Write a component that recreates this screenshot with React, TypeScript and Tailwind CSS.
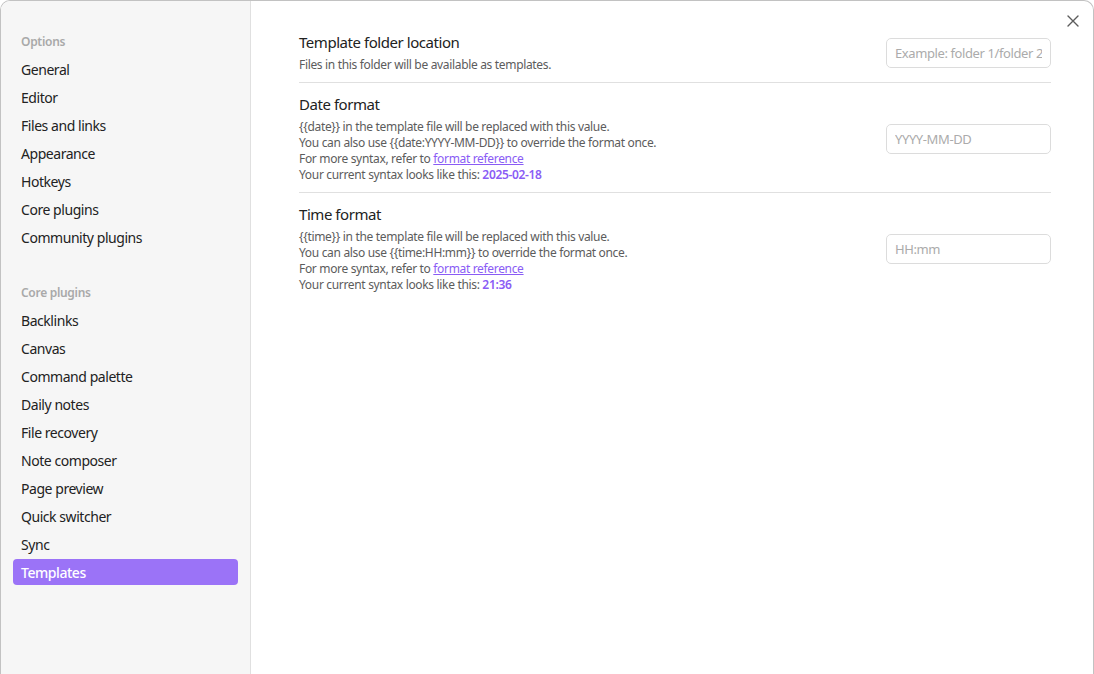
import React from 'react';

const OPTIONS = ['General', 'Editor', 'Files and links', 'Appearance', 'Hotkeys', 'Core plugins', 'Community plugins'];
const CORE = ['Backlinks', 'Canvas', 'Command palette', 'Daily notes', 'File recovery', 'Note composer', 'Page preview', 'Quick switcher', 'Sync', 'Templates'];

function NavItem({ label, active }: { label: string; active?: boolean }) {
  return (
    <div
      className={`h-[26px] mb-[2px] px-2 flex items-center rounded-[4px] text-[14px] tracking-[-0.45px] ${
        active ? 'bg-[#9b73f7] text-white font-medium' : 'text-[#222222]'
      }`}
    >
      {label}
    </div>
  );
}

function Setting({
  title,
  placeholder,
  children,
  last,
}: {
  title: string;
  placeholder: string;
  children: React.ReactNode;
  last?: boolean;
}) {
  return (
    <div className={`flex items-center pt-[11px] pb-[9px] ${last ? '' : 'border-b border-[#e0e0e0]'}`}>
      <div className="flex-1">
        <div className="text-[15px] leading-5 tracking-[-0.45px] text-[#222222]">{title}</div>
        <div className="mt-[5px] text-[12px] leading-4 tracking-[-0.33px] text-[#5c5c5c]">{children}</div>
      </div>
      <input
        type="text"
        placeholder={placeholder}
        className="w-[165px] h-[30px] px-2 rounded-[5px] border border-[#dcdcdc] bg-white text-[13px] tracking-[-0.4px] placeholder:text-[#ababab] outline-none"
      />
    </div>
  );
}

function Link() {
  return <span className="text-[#8a5cf5] underline">format reference</span>;
}

export default function App() {
  return (
    <div
      className="h-[674px] w-[1094px] overflow-hidden bg-white"
      style={{ fontFamily: '"Noto Sans", "Open Sans", sans-serif' }}
    >
      <div className="h-full flex border border-b-0 border-[#c2c2c2] rounded-t-[10px] overflow-hidden relative">
        <aside className="w-[250px] shrink-0 bg-[#f6f6f6] border-r border-[#e0e0e0] px-3 pt-[33px]">
          <div className="h-4 px-2 mb-[6px] text-[12px] leading-4 font-semibold tracking-[-0.3px] text-[#a9a9a9]">Options</div>
          {OPTIONS.map((o) => (
            <NavItem key={o} label={o} />
          ))}
          <div className="h-4 px-2 mt-[35px] mb-[6px] text-[12px] leading-4 font-semibold tracking-[-0.3px] text-[#a9a9a9]">
            Core plugins
          </div>
          {CORE.map((o) => (
            <NavItem key={o} label={o} active={o === 'Templates'} />
          ))}
        </aside>

        <main className="flex-1 pl-[48px] pr-[42px] pt-[20px]">
          <Setting title="Template folder location" placeholder="Example: folder 1/folder 2">
            Files in this folder will be available as templates.
          </Setting>
          <Setting title="Date format" placeholder="YYYY-MM-DD">
            {'{{date}}'} in the template file will be replaced with this value.
            <br />
            You can also use {'{{date:YYYY-MM-DD}}'} to override the format once.
            <br />
            For more syntax, refer to <Link />
            <br />
            Your current syntax looks like this: <span className="font-semibold text-[#8a5cf5]">2025-02-18</span>
          </Setting>
          <Setting title="Time format" placeholder="HH:mm" last>
            {'{{time}}'} in the template file will be replaced with this value.
            <br />
            You can also use {'{{time:HH:mm}}'} to override the format once.
            <br />
            For more syntax, refer to <Link />
            <br />
            Your current syntax looks like this: <span className="font-semibold text-[#8a5cf5]">21:36</span>
          </Setting>
        </main>

        <button className="absolute top-[12px] right-[12px] w-4 h-4 flex items-center justify-center text-[#5c5c5c]">
          <svg width="14" height="14" viewBox="0 0 14 14" fill="none" stroke="currentColor" strokeWidth="1.4" strokeLinecap="round">
            <path d="M2 2L12 12M12 2L2 12" />
          </svg>
        </button>
      </div>
    </div>
  );
}
